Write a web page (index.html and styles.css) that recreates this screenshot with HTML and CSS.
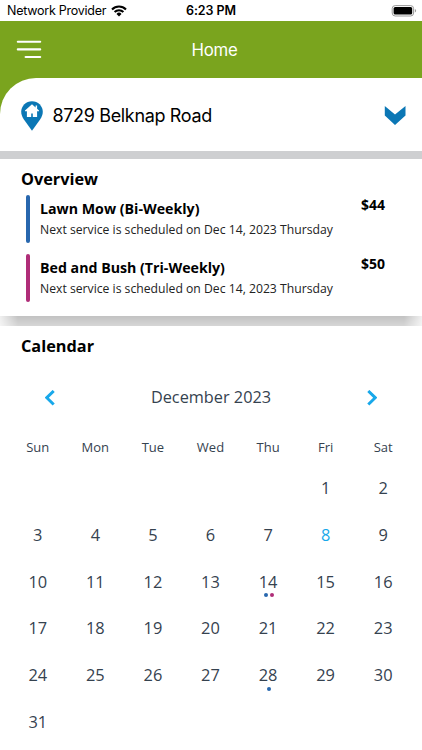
FILE: index.html
```html
<!DOCTYPE html>
<html lang="en">
<head>
<meta charset="utf-8">
<title>Home</title>
<link rel="stylesheet" href="styles.css">
</head>
<body>
<header class="status">
  <div class="carrier"><span>Network Provider</span>
    <svg class="wifi" width="16" height="12" viewBox="0 0 16 12"><g fill="none" stroke="#000" stroke-width="2.1"><path d="M1 4.4a10 10 0 0 1 14 0"/><path d="M3.6 7.1a6.2 6.2 0 0 1 8.8 0"/></g><path d="M8 11.4 5.5 8.9a3.5 3.5 0 0 1 5 0z"/></svg>
  </div>
  <div class="time">6:23 PM</div>
  <svg class="battery" width="26" height="12" viewBox="0 0 26 12"><rect x="1.2" y=".6" width="21.4" height="10.4" rx="3" fill="#fff" stroke="#999" stroke-width="1"/><rect x="2.600" y="2" width="18.600" height="7.600" rx="1.600"/><path d="M23.900 4v3.600q1.200-.5 1.200-1.800T23.900 4z" fill="#999"/></svg>
</header>
<nav class="bar">
  <svg class="menu" width="26" height="20" viewBox="0 0 26 20"><path d="M1.800 1.700h22.400M1.800 9.400h22.400M9.600 17h14.600" stroke="#fff" stroke-width="2.1" stroke-linecap="round"/></svg>
  <h1 class="title">Home</h1>
</nav>
<div class="corner">
  <section class="address">
    <svg class="pin" width="22" height="30" viewBox="0 0 22 30"><path d="M11 .3C5 .3.2 5 .2 10.800c0 3 1.200 5.400 2.700 7.700L11 29.700l8.100-11.200c1.500-2.300 2.700-4.700 2.700-7.700C21.800 5 17 .3 11 .3z" fill="#0b77b5"/><path d="M11 3.200 4 9.600v.7h1.900v5.600h4.300v-3.400h1.600v3.400h4.300v-5.600H18v-.7l-1.900-1.800V4.600h-1.500v1.800z" fill="#fff"/></svg>
    <span class="street">8729 Belknap Road</span>
    <svg class="drop" width="22" height="20" viewBox="0 0 22 20"><path d="M.8 0 11 8.600 21.500 0V9.500L11 19 .8 9.500z" fill="#0b77b5"/></svg>
  </section>
</div>
<section class="overview">
  <h2 class="heading">Overview</h2>
  <article class="service">
    <div class="info"><h3 class="name">Lawn Mow (Bi-Weekly)</h3><p class="next">Next service is scheduled on Dec 14, 2023 Thursday</p></div>
    <div class="price">$44</div>
  </article>
  <article class="service bush">
    <div class="info"><h3 class="name">Bed and Bush (Tri-Weekly)</h3><p class="next">Next service is scheduled on Dec 14, 2023 Thursday</p></div>
    <div class="price">$50</div>
  </article>
</section>
<div class="divider"></div>
<section class="calendar">
  <h2 class="heading">Calendar</h2>
  <div class="month">
    <svg width="10" height="16" viewBox="0 0 10 16"><path d="M8.700 1 1.800 7.700l6.900 6.800" fill="none" stroke="#18a8ea" stroke-width="3"/></svg>
    <span class="label">December 2023</span>
    <svg width="10" height="16" viewBox="0 0 10 16"><path d="M1.300 1 8.200 7.700l-6.900 6.800" fill="none" stroke="#18a8ea" stroke-width="3"/></svg>
  </div>
  <div class="week names"><span>Sun</span><span>Mon</span><span>Tue</span><span>Wed</span><span>Thu</span><span>Fri</span><span>Sat</span></div>
  <div class="week days">
    <span class="first">1</span><span>2</span>
    <span>3</span><span>4</span><span>5</span><span>6</span><span>7</span><span class="today">8</span><span>9</span>
    <span>10</span><span>11</span><span>12</span><span>13</span><span>14<i class="dots"><b class="dot"></b><b class="dot pink"></b></i></span><span>15</span><span>16</span>
    <span>17</span><span>18</span><span>19</span><span>20</span><span>21</span><span>22</span><span>23</span>
    <span>24</span><span>25</span><span>26</span><span>27</span><span>28<i class="dots"><b class="dot"></b></i></span><span>29</span><span>30</span>
    <span>31</span>
  </div>
</section>
</body>
</html>
```
FILE: styles.css
```css
* { box-sizing: border-box; }
body, h1, h2, h3, p { margin: 0; }
body {
  height: 750px;
  overflow: hidden;
  background: #fff;
  color: #000;
  font-family: "Open Sans", "Noto Sans", sans-serif;
}
svg { display: block; flex: none; }
.status {
  display: grid;
  grid-template-columns: 1fr auto 1fr;
  align-items: center;
  height: 21px;
  padding: 0 5px 0 7px;
  font: 12.5px/21px Inter, sans-serif;
}
.carrier { display: flex; align-items: center; gap: 5px; white-space: nowrap; letter-spacing: -.25px; }
.time { font-weight: 600; letter-spacing: -.05px; padding-right: 2px; }
.battery { justify-self: end; }
.bar {
  display: grid;
  grid-template-columns: 1fr auto 1fr;
  align-items: center;
  height: 57px;
  padding: 0 0 0 16px;
  background: #7aa41e;
  color: #fff;
}
.title { font: 400 16.8px/24px Inter, sans-serif; letter-spacing: -.25px; padding-right: 9px; }
.corner { background: #7aa41e; }
.address {
  display: flex;
  align-items: center;
  height: 73px;
  padding: 2px 16px 0 21px;
  background: #fff;
  border-top-left-radius: 36px;
}
.street { flex: 1; margin-left: 9.500px; font: 18px/24px Inter, sans-serif; letter-spacing: -.35px; }
.overview {
  height: 165px;
  padding: 9px 20px 0 21px;
  border-top: 8px solid #cecfd1;
}
.divider {
  height: 10px;
  background: linear-gradient(90deg, rgba(255,255,255,.75), transparent 18px calc(100% - 18px), rgba(255,255,255,.75)), linear-gradient(#c2c2c2, #d6d6d6);
}
.heading { font-size: 16.300px; line-height: 22px; font-weight: 700; }
.service {
  display: flex;
  justify-content: space-between;
  height: 48px;
  margin: 5px 17px 0 5px;
}
.service::before { content: ""; width: 4px; border-radius: 2px; background: #2867ae; }
.bush { margin-top: 11px; }
.bush::before { background: #af2d78; }
.info { flex: 1; padding: 4px 0 0 10px; }
.name { font-size: 14.200px; line-height: 20px; }
.next { margin-top: 1px; font-size: 12.200px; line-height: 20px; color: #222; white-space: nowrap; }
.price { font-size: 14px; line-height: 20px; font-weight: 700; }
.calendar { padding: 9px 10px 0 9px; }
.calendar .heading { padding-left: 12px; }
.month {
  display: flex;
  justify-content: space-between;
  align-items: center;
  height: 24px;
  margin: 29px 35px 0 36px;
  color: #35424f;
}
.label { font-size: 16.300px; line-height: 22px; padding-bottom: 2px; }
.week { display: grid; grid-template-columns: repeat(7, 1fr); text-align: center; color: #35424f; }
.names { margin-top: 27px; font-size: 13px; line-height: 20px; }
.days { margin-top: 19px; font-size: 16.400px; line-height: 24px; grid-auto-rows: 46.800px; }
.days span { position: relative; }
.first { grid-column-start: 6; }
.today { color: #18a8ea; }
.dots { position: absolute; top: 23.500px; left: 1px; right: 0; display: flex; justify-content: center; gap: 2px; }
.dot { width: 4px; height: 4px; border-radius: 50%; background: #2867ae; }
.pink { background: #af2d78; }
```
